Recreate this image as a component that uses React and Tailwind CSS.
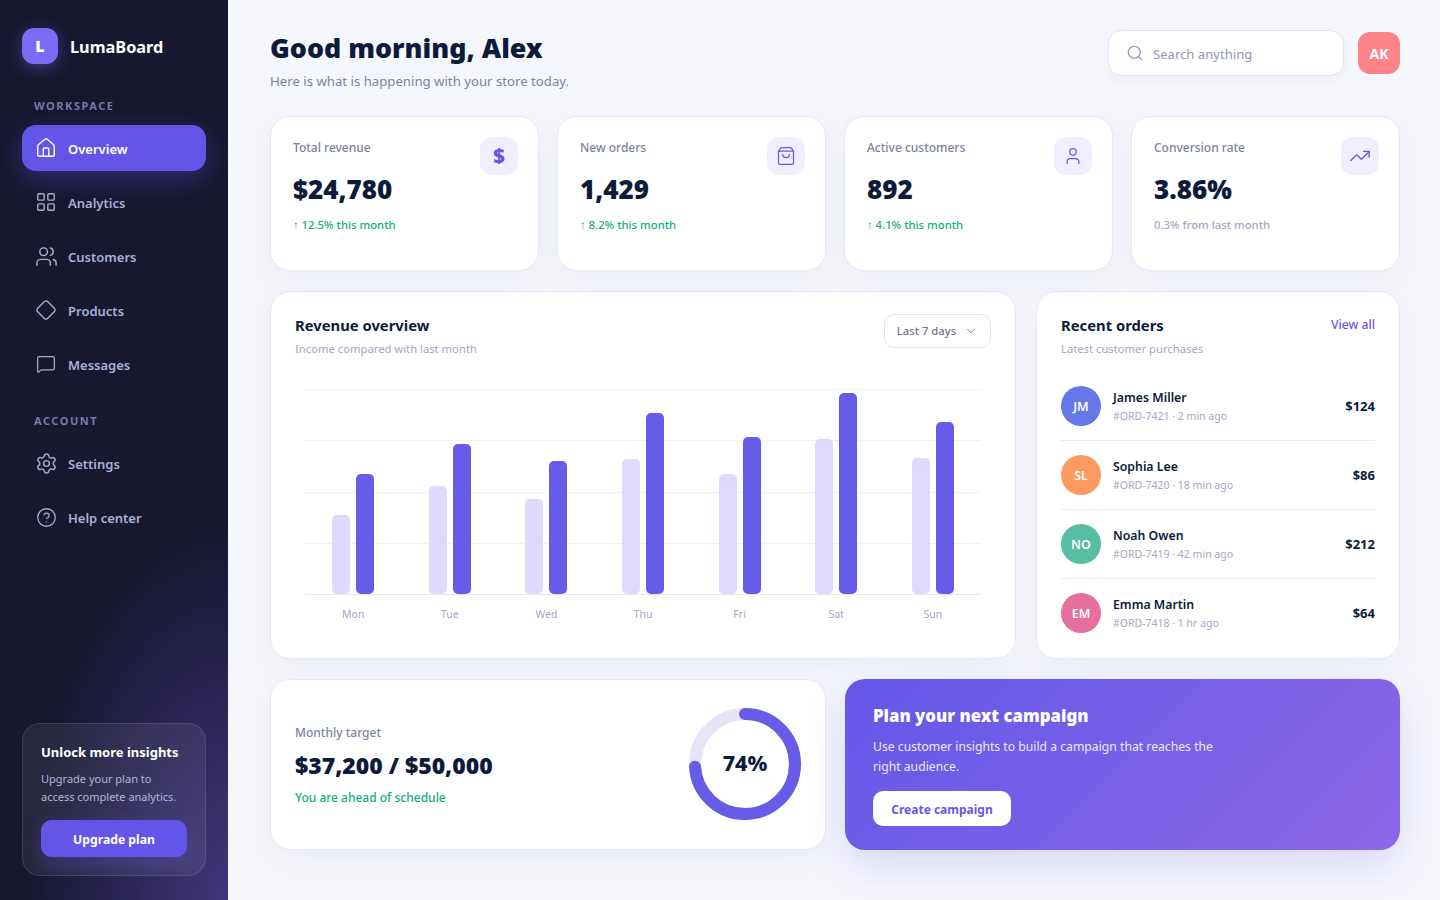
import {
  House,
  LayoutGrid,
  Users,
  Diamond,
  MessageSquare,
  Settings,
  CircleHelp,
  Search,
  ShoppingBag,
  User,
  TrendingUp,
  ChevronDown,
} from "lucide-react";

const WORKSPACE_LINKS = [
  { label: "Overview", icon: House, size: 22, active: true },
  { label: "Analytics", icon: LayoutGrid, size: 22 },
  { label: "Customers", icon: Users, size: 23 },
  { label: "Products", icon: Diamond, size: 22 },
  { label: "Messages", icon: MessageSquare, size: 20 },
];

const ACCOUNT_LINKS = [
  { label: "Settings", icon: Settings, size: 23 },
  { label: "Help center", icon: CircleHelp, size: 21 },
];

const STATS = [
  { label: "Total revenue", value: "$24,780", note: "12.5% this month", up: true, glyph: "$" },
  { label: "New orders", value: "1,429", note: "8.2% this month", up: true, icon: ShoppingBag },
  { label: "Active customers", value: "892", note: "4.1% this month", up: true, icon: User },
  { label: "Conversion rate", value: "3.86%", note: "0.3% from last month", icon: TrendingUp },
];

const BARS = [
  { day: "Mon", last: 79, current: 120 },
  { day: "Tue", last: 108, current: 150 },
  { day: "Wed", last: 95, current: 133 },
  { day: "Thu", last: 135, current: 181 },
  { day: "Fri", last: 120, current: 157 },
  { day: "Sat", last: 155, current: 201 },
  { day: "Sun", last: 136, current: 172 },
];

const ORDERS = [
  { initials: "JM", name: "James Miller", meta: "#ORD-7421 · 2 min ago", total: "$124", color: "bg-[#6478e8]" },
  { initials: "SL", name: "Sophia Lee", meta: "#ORD-7420 · 18 min ago", total: "$86", color: "bg-[#fd9a62]" },
  { initials: "NO", name: "Noah Owen", meta: "#ORD-7419 · 42 min ago", total: "$212", color: "bg-[#58bda3]" },
  { initials: "EM", name: "Emma Martin", meta: "#ORD-7418 · 1 hr ago", total: "$64", color: "bg-[#e66f9d]" },
];

const NavItem = ({ label, icon: Icon, size, active }) => (
  <a
    className={`flex h-[46px] items-center gap-3 rounded-[14px] px-[14px] text-[13px] font-semibold ${
      active
        ? "bg-[#6355e8] text-white shadow-[0_8px_24px_rgba(99,85,232,0.35)]"
        : "text-[#a9b1d6]"
    }`}
  >
    <span className={`flex w-5 shrink-0 justify-center ${active ? "text-white" : "text-[#a9aecb]"}`}>
      <Icon size={size} strokeWidth={1.5} className="shrink-0" />
    </span>
    <span className="pt-[4px]">{label}</span>
  </a>
);

const Sidebar = () => (
  <aside className="flex h-[900px] w-[228px] shrink-0 flex-col bg-[#171730] bg-[radial-gradient(ellipse_200px_370px_at_100%_100%,#41367c,#171730)] px-[22px] pt-7 pb-6">
    <div className="flex items-center gap-3">
      <span className="flex h-9 w-9 items-center justify-center rounded-xl bg-[#7d6bf6] text-[16px] font-black text-white shadow-[0_4px_16px_rgba(125,107,246,0.4)]">
        L
      </span>
      <span className="mt-[2px] text-[16.3px] font-bold text-white">LumaBoard</span>
    </div>

    <p className="mt-[34px] mb-[11px] px-3 text-[11px] leading-4 font-bold tracking-[0.14em] text-[#747ba6]">
      WORKSPACE
    </p>
    <nav className="flex flex-col gap-2">
      {WORKSPACE_LINKS.map((link) => (
        <NavItem key={link.label} {...link} />
      ))}
    </nav>

    <p className="mt-[26px] mb-[11px] px-3 text-[11px] leading-4 font-bold tracking-[0.14em] text-[#747ba6]">
      ACCOUNT
    </p>
    <nav className="flex flex-col gap-2">
      {ACCOUNT_LINKS.map((link) => (
        <NavItem key={link.label} {...link} />
      ))}
    </nav>

    <div className="mt-auto rounded-[18px] border border-white/10 bg-white/[0.07] p-[18px]">
      <p className="text-[13px] leading-5 font-bold whitespace-nowrap text-white">Unlock more insights</p>
      <p className="mt-[8px] text-[11px] leading-[18px] whitespace-nowrap text-[#b0b6d8]">
        Upgrade your plan to
        <br />
        access complete analytics.
      </p>
      <button className="mt-[14px] h-[37px] w-full rounded-[11px] bg-[#6355e8] pt-[4px] text-[12.2px] font-bold text-white shadow-[0_6px_18px_rgba(99,85,232,0.3)]">
        Upgrade plan
      </button>
    </div>
  </aside>
);

const StatCard = ({ label, value, note, up, icon: Icon, glyph }) => (
  <div className="relative h-[155px] rounded-[20px] border border-[#e6e9f4] bg-white px-[22px] pt-[21px] shadow-[0_10px_30px_rgba(40,50,110,0.05)]">
    <p className="text-[12px] leading-5 font-medium text-[#7c82a3]">{label}</p>
    <p className="mt-[13px] text-[26px] leading-9 font-black text-[#0d1b3a]">{value}</p>
    <p className={`mt-[9px] text-[11.3px] leading-[18px] font-medium ${up ? "text-[#0fae84]" : "text-[#a3a8c3]"}`}>
      {up ? "↑ " : ""}
      {note}
    </p>
    <span className="absolute top-5 right-5 flex h-[38px] w-[38px] items-center justify-center rounded-xl bg-[#f1eeff] text-[#6558e8]">
      {glyph ? (
        <span className="text-[20px] font-black">{glyph}</span>
      ) : (
        <Icon size={Icon === TrendingUp ? 22 : 20} strokeWidth={1.5} />
      )}
    </span>
  </div>
);

const RevenueCard = () => (
  <section className="rounded-[20px] border border-[#e6e9f4] bg-white px-6 pt-[22px] shadow-[0_10px_30px_rgba(40,50,110,0.05)]">
    <div className="flex items-start justify-between">
      <div>
        <h2 className="text-[14.8px] leading-[22px] font-bold text-[#0d1b3a]">Revenue overview</h2>
        <p className="mt-[4px] text-[11.25px] leading-[18px] text-[#a3a8c3]">Income compared with last month</p>
      </div>
      <button className="flex h-[34px] w-[107px] items-center justify-center gap-2 rounded-[10px] border border-[#e2e5f1] text-[11.25px] font-medium text-[#6f7595]">
        Last 7 days
        <ChevronDown size={14} strokeWidth={1.5} />
      </button>
    </div>

    <div className="relative mx-[10px] mt-[31px] flex h-[206px] items-end border-b border-[#e6e8f4]">
      {/* grid lines sit behind the bars */}
      <div className="absolute inset-x-0 top-0 bottom-0 flex flex-col justify-between pb-[50px]">
        <div className="h-px bg-[#f0f1f8]" />
        <div className="h-px bg-[#f0f1f8]" />
        <div className="h-px bg-[#f0f1f8]" />
        <div className="h-px bg-[#f0f1f8]" />
      </div>
      {BARS.map((bar) => (
        <div key={bar.day} className="relative flex flex-1 items-end justify-center gap-[6px]">
          <div className="w-[18px] rounded-[5px] bg-[#dedafe]" style={{ height: bar.last }} />
          <div className="w-[18px] rounded-[5px] bg-[#675ce7]" style={{ height: bar.current }} />
        </div>
      ))}
    </div>
    <div className="mx-[10px] mt-[10px] flex">
      {BARS.map((bar) => (
        <span key={bar.day} className="flex-1 text-center text-[10.5px] leading-[18px] text-[#a3a8c3]">
          {bar.day}
        </span>
      ))}
    </div>
  </section>
);

const OrdersCard = () => (
  <section className="rounded-[20px] border border-[#e6e9f4] bg-white px-6 pt-[22px] shadow-[0_10px_30px_rgba(40,50,110,0.05)]">
    <div className="flex items-start justify-between">
      <div>
        <h2 className="text-[14.8px] leading-[22px] font-bold text-[#0d1b3a]">Recent orders</h2>
        <p className="mt-[4px] text-[11.25px] leading-[18px] text-[#a3a8c3]">Latest customer purchases</p>
      </div>
      <a className="mt-[1px] text-[12.2px] leading-5 font-medium text-[#6558e8]">View all</a>
    </div>
    <ul className="mt-[14px]">
      {ORDERS.map((order, i) => (
        <li
          key={order.initials}
          className={`flex items-center py-[14px] ${i < ORDERS.length - 1 ? "border-b border-[#e9ebf5]" : ""}`}
        >
          <span className={`flex h-10 w-10 items-center justify-center rounded-full pt-[2px] text-[12.5px] font-semibold text-white ${order.color}`}>
            {order.initials}
          </span>
          <div className="mt-[1px] ml-3 flex-1">
            <p className="text-[12.3px] leading-[18px] font-semibold text-[#0d1b3a]">{order.name}</p>
            <p className="mt-[1px] text-[10.5px] leading-4 text-[#a3a8c3]">{order.meta}</p>
          </div>
          <span className="mt-[2px] text-[13px] font-bold text-[#0d1b3a]">{order.total}</span>
        </li>
      ))}
    </ul>
  </section>
);

const TargetCard = () => (
  <section className="flex items-center justify-between rounded-[20px] border border-[#e6e9f4] bg-white pr-6 pl-6 shadow-[0_10px_30px_rgba(40,50,110,0.05)]">
    <div className="mt-[2px]">
      <p className="text-[12px] leading-5 font-medium text-[#7c82a3]">Monthly target</p>
      <p className="mt-[6px] text-[23px] leading-8 font-black text-[#0d1b3a]">$37,200 / $50,000</p>
      <p className="mt-[7px] text-[12px] leading-5 font-medium text-[#0fae84]">You are ahead of schedule</p>
    </div>
    <div className="relative mb-[2px] flex h-[112px] w-[112px] items-center justify-center">
      <svg viewBox="0 0 112 112" className="absolute inset-0">
        <circle cx="56" cy="56" r="50" fill="none" stroke="#e8e4f8" strokeWidth="12" />
        <circle
          cx="56"
          cy="56"
          r="50"
          fill="none"
          stroke="#675ce7"
          strokeWidth="12"
          strokeLinecap="round"
          strokeDasharray="232.5 314.2"
          transform="rotate(-90 56 56)"
        />
      </svg>
      <span className="relative text-[21.5px] font-extrabold text-[#0d1b3a]">74%</span>
    </div>
  </section>
);

const CampaignCard = () => (
  <section className="rounded-[20px] bg-[linear-gradient(135deg,#6457e8,#8b68e6)] px-7 pt-[25px] shadow-[0_16px_40px_rgba(101,88,232,0.2)]">
    <h2 className="text-[16.8px] leading-6 font-black text-white">Plan your next campaign</h2>
    <p className="mt-[9px] w-[360px] text-[12.2px] leading-[20px] text-[#ece9ff]">
      Use customer insights to build a campaign that reaches the right audience.
    </p>
    <button className="mt-[14px] h-[35px] w-[138px] rounded-[10px] bg-white pt-[2px] text-[12px] font-bold text-[#6558e8]">
      Create campaign
    </button>
  </section>
);

export default function App() {
  return (
    <div className="flex h-[900px] overflow-hidden bg-[#f6f7fc] font-['Noto_Sans',sans-serif]">
      <Sidebar />
      <main className="flex-1 pt-[30px] pr-10 pl-[42px]">
        <header className="flex items-start justify-between">
          <div>
            <h1 className="text-[26.8px] leading-9 font-black text-[#0d1b3a]">Good morning, Alex</h1>
            <p className="mt-[5px] text-[13.2px] leading-5 text-[#7c82a3]">Here is what is happening with your store today.</p>
          </div>
          <div className="flex items-center gap-[14px]">
            <div className="flex h-[46px] w-[236px] items-center gap-[9px] rounded-[14px] border border-[#e2e5f1] bg-white px-[17px] shadow-[0_4px_12px_rgba(40,50,110,0.04)]">
              <Search size={18} strokeWidth={1.5} className="text-[#8f95b2]" />
              <span className="pt-[4px] text-[13.1px] text-[#9398b5]">Search anything</span>
            </div>
            <span className="flex h-[42px] w-[42px] items-center justify-center rounded-xl bg-[#ff8489] text-[14px] font-bold text-white">
              AK
            </span>
          </div>
        </header>

        <div className="mt-[25px] grid grid-cols-4 gap-[18px]">
          {STATS.map((stat) => (
            <StatCard key={stat.label} {...stat} />
          ))}
        </div>

        <div className="mt-5 grid h-[368px] grid-cols-[746px_364px] gap-5">
          <RevenueCard />
          <OrdersCard />
        </div>

        <div className="mt-5 grid h-[171px] grid-cols-[556px_555px] gap-[19px]">
          <TargetCard />
          <CampaignCard />
        </div>
      </main>
    </div>
  );
}
